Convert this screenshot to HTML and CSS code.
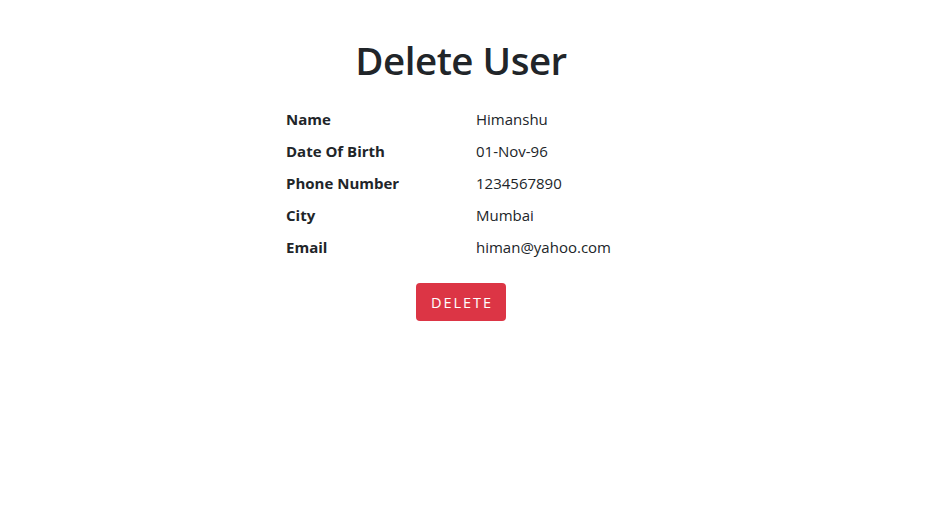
FILE: index.html
```html
<!DOCTYPE html>
<html>
<head>
<meta charset="utf-8">
<link rel="stylesheet" href="styles.css">
</head>
<body>
<main class="page">
  <h1 class="title">Delete User</h1>
  <table class="details">
    <tr><th>Name</th><td>Himanshu</td></tr>
    <tr><th>Date Of Birth</th><td>01-Nov-96</td></tr>
    <tr><th>Phone Number</th><td>1234567890</td></tr>
    <tr><th>City</th><td>Mumbai</td></tr>
    <tr><th>Email</th><td>himan@yahoo.com</td></tr>
  </table>
  <div class="actions">
    <button class="btn-delete" type="button">Delete</button>
  </div>
</main>
</body>
</html>
```
FILE: styles.css
```css
html, body {
  margin: 0;
  padding: 0;
  background: #fff;
}
body {
  font-family: "Open Sans", "Noto Sans", sans-serif;
  color: #212529;
  font-size: 16px;
  line-height: 1.5;
}
.page {
  width: 350px;
  margin-left: 286px;
  padding-top: 37px;
}
.title {
  margin: 0 0 20px;
  text-align: center;
  font-size: 38.5px;
  font-weight: 600;
  line-height: 1.2;
  letter-spacing: -0.5px;
}
.details {
  border-collapse: collapse;
  font-size: 15px;
  line-height: 24px;
}
.details th {
  width: 190px;
  padding: 4px 0;
  text-align: left;
  font-weight: 700;
}
.details td {
  padding: 4px 0;
}
.actions {
  margin-top: 20px;
  text-align: center;
}
.btn-delete {
  width: 90px;
  height: 38px;
  border: none;
  border-radius: 4px;
  background: #dc3545;
  color: #fff;
  font-family: inherit;
  font-size: 14.5px;
  text-transform: uppercase;
  letter-spacing: 2px;
  padding: 0 0 0 2px;
}
```
